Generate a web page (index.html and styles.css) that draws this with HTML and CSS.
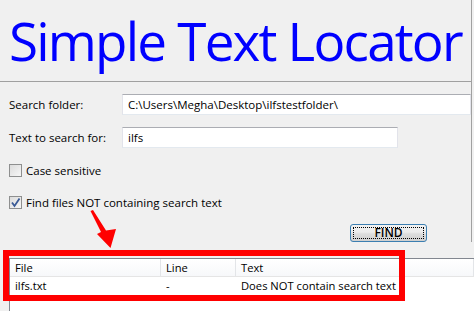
FILE: index.html
```html
<!DOCTYPE html>
<html lang="en">
<head>
    <meta charset="UTF-8">
    <title>Simple Text Locator</title>
    <link rel="stylesheet" href="styles.css">
</head>
<body>
    <div class="app">
        <h1 class="title">Simple Text Locator</h1>
        <div class="form">
            <div class="field">
                <label>Search folder:</label>
                <div class="box wide">C:\Users\Megha\Desktop\ilfstestfolder\</div>
            </div>
            <div class="field">
                <label>Text to search for:</label>
                <div class="box short">ilfs</div>
            </div>
            <div class="check">
                <span class="tick"></span>
                <span>Case sensitive</span>
            </div>
            <div class="check">
                <span class="tick">
                    <svg width="11" height="11" viewBox="0 0 11 11"><path d="M2 5.5 L4.5 9 L9.5 1.5" fill="none" stroke="#3a5a96" stroke-width="1.8"/></svg>
                </span>
                <span>Find files NOT containing search text</span>
            </div>
            <div class="actions">
                <button class="find"><span>FIND</span></button>
            </div>
        </div>
    </div>

    <div class="list">
        <div class="list-head">
            <div class="col c-file">File</div>
            <div class="col c-line">Line</div>
            <div class="col c-text">Text</div>
        </div>
        <div class="list-row">
            <div class="col c-file">ilfs.txt</div>
            <div class="col c-line">-</div>
            <div class="col c-text">Does NOT contain search text</div>
        </div>
    </div>

    <!-- annotation -->
    <div class="mark"></div>
    <svg class="arrow" width="40" height="50" viewBox="80 205 40 50">
        <polygon points="90.5,211 101,232 97,234 110.5,248 116,229 106,230.5 93,210" fill="#f00"/>
    </svg>
</body>
</html>
```

FILE: styles.css
```css
body {
    margin: 0;
    width: 474px;
    height: 311px;
    overflow: hidden;
    position: relative;
    background-color: #f0f0f0;
    font-family: "Open Sans", "Noto Sans", sans-serif;
    font-size: 11.5px;
    color: #000;
}

.app {
    width: 471px;
    border-right: 1px solid #a0a0a0;
}

.title {
    margin: 0;
    padding: 3px 0 0 9px;
    height: 78px;
    font-size: 53px;
    font-weight: normal;
    letter-spacing: -1.8px;
    line-height: 76px;
    color: #0000ff;
    white-space: nowrap;
    border-bottom: 1px solid #a0a0a0;
}

.form {
    margin-left: 9px;
    padding-top: 12px;
    display: flex;
    flex-direction: column;
    gap: 12px;
}

.field {
    display: flex;
    align-items: center;
    height: 21px;
}

.field label {
    width: 113px;
}

.box {
    box-sizing: border-box;
    height: 21px;
    padding: 0 5px;
    line-height: 19px;
    background-color: #fff;
    border: 1px solid #e2e3ea;
    border-top-color: #abadb3;
    border-bottom-color: #e3e9ef;
    white-space: nowrap;
}

.wide {
    flex: 1;
}

.short {
    width: 276px;
}

.check {
    display: flex;
    align-items: center;
    gap: 4px;
    height: 20px;
}

.tick {
    box-sizing: border-box;
    width: 13px;
    height: 13px;
    border: 1px solid #8e8f8f;
    background: linear-gradient(135deg, #dcdcdc, #f6f6f6);
    display: flex;
    align-items: center;
    justify-content: center;
}

.actions {
    display: flex;
    padding-left: 341px;
}

.find {
    box-sizing: border-box;
    width: 77px;
    height: 18px;
    padding: 2px;
    border: 1px solid #3c7fb1;
    border-radius: 3px;
    background: linear-gradient(#f2f2f2, #ebebeb 45%, #dddddd 55%, #cfcfcf);
    font-family: inherit;
    font-size: 12px;
    font-weight: 600;
}

.find span {
    display: block;
    height: 100%;
    box-sizing: border-box;
    border: 1px dotted #000;
    line-height: 10px;
}

.list {
    margin: 16px 0 0 9px;
    height: 60px;
    font-size: 11.2px;
    background-color: #fff;
    border-top: 1px solid #828790;
    border-left: 1px solid #828790;
}

.list-head, .list-row {
    display: flex;
    height: 18px;
    line-height: 18px;
}

.list-head {
    height: 17px;
    line-height: 17px;
    background: linear-gradient(#fff, #f7f8fa);
    border-bottom: 1px solid #e5e5e5;
}

.list-head .col {
    border-right: 1px solid #e3e5e8;
}

.col {
    box-sizing: border-box;
    padding-left: 5px;
    white-space: nowrap;
}

.c-file {
    width: 151px;
}

.c-line {
    width: 75px;
}

.c-text {
    flex: 1;
}

.mark {
    position: absolute;
    left: 3px;
    top: 250px;
    width: 402px;
    height: 51px;
    box-sizing: border-box;
    border: 6px solid #f00;
}

.arrow {
    position: absolute;
    left: 80px;
    top: 205px;
}
```
